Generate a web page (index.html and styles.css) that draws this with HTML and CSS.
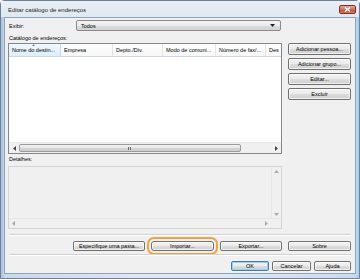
FILE: index.html
```html
<!DOCTYPE html>
<html lang="pt">
<head>
<meta charset="utf-8">
<title>Editar catálogo de endereços</title>
<link rel="stylesheet" href="styles.css">
</head>
<body>
<div class="window">
  <div class="titlebar">
    <span class="title">Editar catálogo de endereços</span>
    <div class="close"><svg width="7" height="5" viewBox="0 0 7 5"><path d="M1 0.5 L6 4.5 M6 0.5 L1 4.5" stroke="#fff" stroke-width="1.3"/></svg></div>
  </div>
  <div class="client">
    <div class="row-exibir">
      <span class="lbl-exibir">Exibir:</span>
      <div class="combo"><span>Todos</span><svg class="combo-arrow" width="5" height="3" viewBox="0 0 5 3"><path d="M0 0 H5 L2.5 3 Z" fill="#222"/></svg></div>
    </div>
    <div class="lbl">Catálogo de endereços:</div>
    <div class="main">
      <div class="list">
        <div class="header">
          <div class="col c1 sel"><svg class="sort" width="3" height="2" viewBox="0 0 3 2"><path d="M0 2 H3 L1.5 0 Z" fill="#7a8796"/></svg>Nome do destin...</div>
          <div class="col c2">Empresa</div>
          <div class="col c3">Depto./Div.</div>
          <div class="col c4">Modo de comuni...</div>
          <div class="col c5">Número de fax/...</div>
          <div class="col c6">Des</div>
        </div>
        <div class="list-body"></div>
        <div class="hscroll">
          <div class="sarrow"><svg width="3" height="5" viewBox="0 0 3 5"><path d="M3 0 V5 L0 2.5 Z" fill="#444"/></svg></div>
          <div class="track"><div class="thumb"><span class="grip"></span></div></div>
          <div class="sarrow"><svg width="3" height="5" viewBox="0 0 3 5"><path d="M0 0 V5 L3 2.5 Z" fill="#444"/></svg></div>
        </div>
      </div>
      <div class="side">
        <button class="btn">Adicionar pessoa...</button>
        <button class="btn">Adicionar grupo...</button>
        <button class="btn">Editar...</button>
        <button class="btn">Excluir</button>
      </div>
    </div>
    <div class="lbl lbl-det">Detalhes:</div>
    <div class="details">
      <div class="det-top">
        <div class="det-body"></div>
        <div class="vscroll">
          <svg width="5" height="3" viewBox="0 0 5 3"><path d="M0 3 H5 L2.5 0 Z" fill="#aaa"/></svg>
          <svg width="5" height="3" viewBox="0 0 5 3"><path d="M0 0 H5 L2.5 3 Z" fill="#aaa"/></svg>
        </div>
      </div>
      <div class="det-h">
        <svg width="3" height="5" viewBox="0 0 3 5"><path d="M3 0 V5 L0 2.5 Z" fill="#aaa"/></svg>
        <svg width="3" height="5" viewBox="0 0 3 5"><path d="M0 0 V5 L3 2.5 Z" fill="#aaa"/></svg>
      </div>
    </div>
    <div class="sep"></div>
    <div class="row1">
      <button class="btn b-pasta">Especifique uma pasta...</button>
      <button class="btn b-imp">Importar...</button>
      <button class="btn b-exp">Exportar...</button>
      <button class="btn b-sobre">Sobre</button>
    </div>
    <div class="sep sep2"></div>
    <div class="row2">
      <button class="btn b-ok">OK</button>
      <button class="btn b-cancel">Cancelar</button>
      <button class="btn b-ajuda">Ajuda</button>
    </div>
  </div>
</div>
</body>
</html>
```

FILE: styles.css
```css
html, body {
  margin: 0;
  padding: 0;
}
body {
  width: 360px;
  height: 279px;
  overflow: hidden;
  font-family: "Liberation Sans", Arial, sans-serif;
  font-size: 5.5px;
  color: #000;
  background: #fff;
}
.window {
  box-sizing: border-box;
  width: 360px;
  height: 279px;
  display: flex;
  flex-direction: column;
  padding: 0 3px 4px 3px;
  border: 1px solid #6f8198;
  border-radius: 4px 4px 0 0;
  background: linear-gradient(90deg, #a9c1dc 0, #c9d9eb 4px, #dfe8f2 40%, #dfe8f2 60%, #c9dbee calc(100% - 4px), #9ed0ec 100%);
}
.titlebar {
  height: 16px;
  display: flex;
  align-items: center;
  justify-content: space-between;
  background: linear-gradient(#e9eff6, #dfe7f0);
  margin: 0 -3px;
  padding-right: 3px;
  padding-left: 7px;
}
.title {
  font-size: 6px;
  color: #1e1e1e;
  margin-top: 1px;
}
.close {
  width: 17px;
  height: 9px;
  box-sizing: border-box;
  border: 1px solid #7a3426;
  border-radius: 2px;
  background: linear-gradient(#e9a79a, #d0705e 50%, #c24a35 51%, #d67a5f);
  display: flex;
  align-items: center;
  justify-content: center;
  margin-top: 1px;
}
.client {
  flex: 1;
  background: #f0f0f0;
  border: 1px solid #8ea3bd;
  padding: 2px 4px 0 3px;
  display: flex;
  flex-direction: column;
}
.row-exibir {
  display: flex;
  align-items: center;
  height: 11px;
}
.lbl-exibir {
  width: 68px;
  padding-left: 1px;
  box-sizing: border-box;
}
.combo {
  box-sizing: border-box;
  width: 205px;
  height: 11px;
  border: 1px solid #8a8a8a;
  border-radius: 2px;
  background: linear-gradient(#f4f4f4, #ebebeb 50%, #dcdcdc 51%, #d3d3d3);
  display: flex;
  align-items: center;
  justify-content: space-between;
  padding: 0 5px 0 4px;
}
.lbl {
  height: 8px;
  line-height: 8px;
  margin-top: 3px;
  padding-left: 1px;
}
.main {
  display: flex;
  gap: 6px;
  margin-top: 1px;
}
.list {
  box-sizing: border-box;
  width: 274px;
  height: 111px;
  border: 1px solid #828790;
  background: #fff;
  display: flex;
  flex-direction: column;
}
.header {
  display: flex;
  height: 12px;
  border-bottom: 1px solid #d5d5d5;
  background: linear-gradient(#ffffff, #f6f7f8);
  overflow: hidden;
}
.col {
  position: relative;
  box-sizing: border-box;
  border-right: 1px solid #e3e5e7;
  padding-left: 3px;
  display: flex;
  align-items: center;
  white-space: nowrap;
  overflow: hidden;
  flex: none;
}
.c1 { width: 52px; }
.c2 { width: 52px; }
.c3 { width: 50px; }
.c4 { width: 53px; }
.c5 { width: 50px; }
.c6 { width: 16px; border-right: none; }
.sel {
  background: linear-gradient(#f1f8fd, #dbeefb);
  border-right: 1px solid #c0dcf3;
}
.sort {
  position: absolute;
  top: 0;
  left: 23px;
}
.list-body {
  flex: 1;
}
.hscroll {
  height: 10px;
  display: flex;
  background: #f0f0f0;
  border-top: 1px solid #e8e8e8;
}
.sarrow {
  width: 10px;
  display: flex;
  align-items: center;
  justify-content: center;
}
.track {
  flex: 1;
  padding: 1px 0;
  display: flex;
}
.thumb {
  box-sizing: border-box;
  width: 222px;
  height: 8px;
  border: 1px solid #9a9a9a;
  border-radius: 2px;
  background: linear-gradient(#f3f3f3, #e4e4e4 50%, #d4d4d4 51%, #cfcfcf);
  display: flex;
  align-items: center;
  justify-content: center;
}
.grip {
  width: 4px;
  height: 3px;
  background: repeating-linear-gradient(90deg, #6a6a6a 0 1px, transparent 1px 2px);
}
.side {
  display: flex;
  flex-direction: column;
  gap: 3px;
  width: 63px;
}
.btn {
  box-sizing: border-box;
  height: 12px;
  margin: 0;
  padding: 0;
  font-family: "Liberation Sans", Arial, sans-serif;
  font-size: 5.5px;
  color: #000;
  border: 1px solid #707070;
  border-radius: 2px;
  background: linear-gradient(#f2f2f2, #ebebeb 50%, #dddddd 51%, #cfcfcf);
  box-shadow: inset 0 0 0 1px rgba(255,255,255,0.7);
  display: flex;
  align-items: center;
  justify-content: center;
  white-space: nowrap;
}
.lbl-det {
  margin-top: 1px;
}
.details {
  box-sizing: border-box;
  width: 274px;
  height: 63px;
  margin-top: 3px;
  border: 1px solid #d4d4d4;
  background: #f0f0f0;
  display: flex;
  flex-direction: column;
}
.det-top {
  flex: 1;
  display: flex;
}
.det-body {
  flex: 1;
}
.vscroll {
  width: 9px;
  border-left: 1px solid #e6e6e6;
  display: flex;
  flex-direction: column;
  align-items: center;
  justify-content: space-between;
  padding: 3px 0 2px;
}
.det-h {
  height: 9px;
  border-top: 1px solid #e6e6e6;
  display: flex;
  align-items: center;
  justify-content: space-between;
  padding: 0 13px 0 3px;
}
.sep {
  height: 0;
  border-top: 1px solid #d2d2d2;
  border-bottom: 1px solid #fff;
  margin-top: 5px;
  margin-left: 1px;
}
.row1 {
  display: flex;
  justify-content: flex-end;
  gap: 6px;
  margin-top: 5px;
}
.row1 .btn { height: 10px; }
.b-pasta { width: 72px; }
.b-imp {
  width: 63px;
  outline: 2px solid #f2a43a;
  outline-offset: 2px;
  border-radius: 3px;
}
.b-exp { width: 62px; }
.b-sobre { width: 63px; }
.sep2 { margin-top: 3px; }
.row2 {
  display: flex;
  justify-content: flex-end;
  gap: 3px;
  margin-top: 5px;
}
.row2 .btn { height: 10px; }
.b-ok {
  width: 38px;
  border-color: #3c7fb1;
  box-shadow: inset 0 0 0 1px #9bd0f2;
}
.b-cancel { width: 39px; }
.b-ajuda { width: 37px; }
```
